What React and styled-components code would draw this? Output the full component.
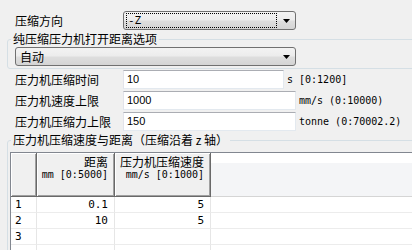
import React from 'react';
import styled, { createGlobalStyle } from 'styled-components';

// Общие стили страницы: серый фон Windows-диалога
const GlobalStyle = createGlobalStyle`
  html, body {
    margin: 0;
    padding: 0;
    background: #f0f0f0;
  }
  body {
    font-family: "Noto Sans CJK SC", sans-serif;
    font-size: 12px;
    color: #000;
  }
`;

const Page = styled.div`
  width: 412px;
  height: 250px;
  overflow: hidden;
  box-sizing: border-box;
  padding-top: 11px;
  display: flex;
  flex-direction: column;
`;

/* ---------- строки «подпись + поле» ---------- */
const FieldRow = styled.div`
  display: flex;
  align-items: center;
  height: 19px;
  padding-left: 15px;
  margin-top: ${(p) => p.$mt || 0}px;
`;

const Label = styled.span`
  width: 108px;
  flex: none;
  line-height: 14px;
  white-space: nowrap;
`;

const Units = styled.span`
  margin-left: 3px;
  font-family: "DejaVu Sans Mono", "Liberation Mono", monospace;
  font-size: 10px;
  white-space: pre;
`;

const TextInput = styled.div`
  width: ${(p) => p.$w}px;
  height: 19px;
  box-sizing: border-box;
  background: #fff;
  border: 1px solid;
  border-color: #abadb3 #e3e9ef #e3e9ef #e2e3ea;
  padding-left: 3px;
  font-family: "Liberation Sans", sans-serif;
  font-size: 11px;
  line-height: 17px;
`;

/* ---------- выпадающий список ---------- */
const Combo = styled.div`
  width: ${(p) => p.$w}px;
  height: 19px;
  box-sizing: border-box;
  border: 1px solid #707070;
  border-radius: 3px;
  background: linear-gradient(#f3f3f3 0%, #ececec 48%, #dedede 52%, #d4d4d4 100%);
  display: flex;
  align-items: center;
  padding: 0 5px 0 2px;
`;

const ComboValue = styled.div`
  flex: 1;
  height: 13px;
  border: 1px dotted ${(p) => (p.$focus ? '#000' : 'transparent')};
  margin-right: ${(p) => (p.$focus ? 6 : 0)}px;
  padding-left: 1px;
  line-height: 13px;
  font-family: ${(p) => (p.$mono ? '"DejaVu Sans Mono", monospace' : 'inherit')};
  font-size: ${(p) => (p.$mono ? 11 : 12)}px;
  white-space: nowrap;
`;

const Arrow = () => (
  <svg width="7" height="4" viewBox="0 0 7 4" style={{ flex: 'none' }}>
    <path d="M0 0H7L3.5 4Z" fill="#000" />
  </svg>
);

/* ---------- групповые рамки ---------- */
const Group = styled.fieldset`
  margin: ${(p) => p.$mt || 0}px -10px 0 7px;
  padding: 0;
  border: 1px solid #d5dfe5;
  border-radius: 3px;
  min-width: 0;
`;

const Legend = styled.legend`
  margin-left: 3px;
  padding: 0 2px;
  line-height: 14px;
  white-space: nowrap;
`;

const GroupBody = styled.div`
  padding: ${(p) => p.$pad};
`;

/* ---------- таблица ---------- */
const Grid = styled.div`
  display: grid;
  grid-template-columns: 26px 78px 96px 1fr;
  grid-auto-rows: 16px;
  grid-template-rows: 44px;
  border-left: 1px solid #828790;
  border-top: 1px solid #828790;
  background: #fff;
`;

const HeadCell = styled.div`
  box-sizing: border-box;
  background: #f0f0f0;
  border-right: 1px solid #696969;
  border-bottom: 1px solid #696969;
  box-shadow: inset 1px 1px #fff, inset -1px -1px #a0a0a0;
  padding: 2px 6px 0 0;
  text-align: right;
`;

const HeadTitle = styled.div`
  line-height: 14px;
  white-space: nowrap;
`;

const HeadSub = styled.div`
  font-family: "DejaVu Sans Mono", monospace;
  font-size: 10px;
  line-height: 11px;
  white-space: pre;
`;

const HeadFiller = styled.div`
  background: linear-gradient(#fff 0 10px, #f4f5f7 10px);
  border-bottom: 1px solid #d5d5d5;
`;

const Cell = styled.div`
  box-sizing: border-box;
  border-right: 1px solid #e6e6e6;
  border-bottom: 1px solid #ececec;
  font-family: "DejaVu Sans Mono", monospace;
  font-size: 11px;
  line-height: 15px;
  text-align: ${(p) => (p.$left ? 'left' : 'right')};
  padding: ${(p) => (p.$left ? '0 0 0 4px' : '0 6px 0 0')};
  white-space: pre;
`;

const rows = [
  ['1', '0.1', '5'],
  ['2', '10', '5'],
  ['3', '', ''],
  ['', '', ''],
];

export default function App() {
  return (
    <>
      <GlobalStyle />
      <Page>
        <FieldRow>
          <Label>压缩方向</Label>
          <Combo $w={173}>
            <ComboValue $focus $mono>-Z</ComboValue>
            <Arrow />
          </Combo>
        </FieldRow>

        <Group $mt={2}>
          <Legend>纯压缩压力机打开距离选项</Legend>
          <GroupBody $pad="1px 0 2px 7px">
            <Combo $w={281}>
              <ComboValue>自动</ComboValue>
              <Arrow />
            </Combo>
          </GroupBody>
        </Group>

        <FieldRow $mt={1}>
          <Label>压力机压缩时间</Label>
          <TextInput $w={161}>10</TextInput>
          <Units>s [0:1200]</Units>
        </FieldRow>
        <FieldRow $mt={2}>
          <Label>压力机速度上限</Label>
          <TextInput $w={173}>1000</TextInput>
          <Units>mm/s (0:10000)</Units>
        </FieldRow>
        <FieldRow $mt={2}>
          <Label>压力机压缩力上限</Label>
          <TextInput $w={173}>150</TextInput>
          <Units>tonne (0:70002.2)</Units>
        </FieldRow>

        <Group $mt={2}>
          <Legend>压力机压缩速度与距离（压缩沿着 z 轴）</Legend>
          <GroupBody $pad="5px 0 0 2px">
            <Grid>
              <HeadCell />
              <HeadCell>
                <HeadTitle>距离</HeadTitle>
                <HeadSub>mm [0:5000]</HeadSub>
              </HeadCell>
              <HeadCell>
                <HeadTitle>压力机压缩速度</HeadTitle>
                <HeadSub>mm/s [0:1000]</HeadSub>
              </HeadCell>
              <HeadFiller />
              {rows.map((r, i) => (
                <React.Fragment key={i}>
                  <Cell $left>{r[0]}</Cell>
                  <Cell>{r[1]}</Cell>
                  <Cell>{r[2]}</Cell>
                  <Cell />
                </React.Fragment>
              ))}
            </Grid>
          </GroupBody>
        </Group>
      </Page>
    </>
  );
}
